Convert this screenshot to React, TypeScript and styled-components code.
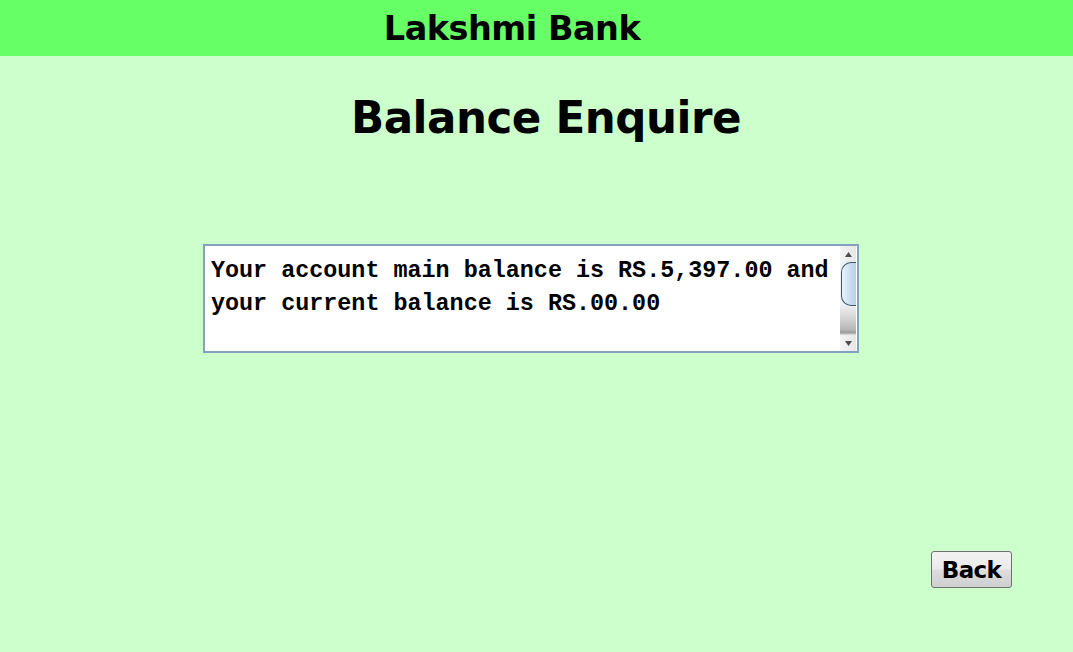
import React from "react";
import styled, { createGlobalStyle } from "styled-components";

const Global = createGlobalStyle`
  html, body { margin: 0; padding: 0; }
  body {
    background: #ccffcc;
    font-family: Tahoma, "DejaVu Sans", Verdana, sans-serif;
    width: 1073px;
    height: 652px;
    overflow: hidden;
  }
`;

const Page = styled.div`
  display: flex;
  flex-direction: column;
  height: 652px;
`;

const Header = styled.header`
  height: 56px;
  background: #66ff66;
  display: flex;
  align-items: center;
  justify-content: center;
  padding-right: 49px;
`;

const HeaderTitle = styled.h1`
  margin: 0;
  font-size: 33.5px;
  font-weight: bold;
  color: #000;
  letter-spacing: -0.5px;
`;

const PageTitle = styled.h2`
  margin: 30px 0 0;
  padding-left: 19px;
  text-align: center;
  font-size: 43.6px;
  font-weight: bold;
  color: #000;
  letter-spacing: -0.5px;
  line-height: 64px;
`;

const Content = styled.main`
  display: flex;
  flex-direction: column;
  padding: 0 0 0 203px;
  margin-top: 94px;
`;

const Box = styled.div`
  width: 652px;
  height: 105px;
  border: 2px solid #84a0c0;
  background: #fff;
  display: flex;
`;

const TextArea = styled.textarea`
  flex: 1;
  border: none;
  outline: none;
  resize: none;
  overflow: hidden;
  margin: 0;
  padding: 9px 0 0 6px;
  font-family: "Liberation Mono", "Courier New", monospace;
  font-weight: bold;
  font-size: 23.4px;
  line-height: 33px;
  color: #000;
  background: transparent;
`;

const ScrollBar = styled.div`
  width: 16px;
  margin: 0 1px 0 0;
  display: flex;
  flex-direction: column;
  background: linear-gradient(to right, #f3f3f3, #e9e9e9);
`;

const ArrowButton = styled.div`
  height: 16px;
  display: flex;
  align-items: center;
  justify-content: center;
  background: linear-gradient(to right, #f4f4f4, #e6e6e6);
`;

const Thumb = styled.div`
  height: 42px;
  margin-left: 1px;
  border: 1px solid #3c5a6e;
  border-right: none;
  border-radius: 10px 0 0 10px;
  background: linear-gradient(to right, #eaf3fb, #c9dcee 60%, #b9d0e6);
`;

const Track = styled.div`
  flex: 1;
  background: linear-gradient(to bottom, #eeeeee 0%, #d6d6d6 40%, #b8b8b8 80%, #9d9d9d 92%, #e3e3e3 100%);
`;

const Footer = styled.div`
  display: flex;
  justify-content: flex-end;
  padding-right: 61px;
  margin-top: 198px;
`;

const Button = styled.button`
  width: 81px;
  height: 37px;
  padding: 0;
  border: 1px solid #707070;
  border-radius: 3px;
  background: linear-gradient(to bottom, #f2f2f2 0%, #ebebeb 48%, #dddddd 52%, #cfcfcf 100%);
  font-family: Tahoma, "DejaVu Sans", Verdana, sans-serif;
  font-weight: bold;
  font-size: 23px;
  letter-spacing: -0.6px;
  color: #000;
  cursor: pointer;
`;

const Arrow = ({ down }: { down?: boolean }) => (
  <svg width="7" height="5" viewBox="0 0 7 5">
    <polygon points={down ? "0,0 7,0 3.5,5" : "0,5 7,5 3.5,0"} fill="#4d4d4d" />
  </svg>
);

export default function App() {
  return (
    <Page>
      <Global />
      <Header>
        <HeaderTitle>Lakshmi Bank</HeaderTitle>
      </Header>
      <PageTitle>Balance Enquire</PageTitle>
      <Content>
        <Box>
          <TextArea
            readOnly
            value="Your account main balance is RS.5,397.00 and your current balance is RS.00.00"
          />
          <ScrollBar>
            <ArrowButton>
              <Arrow />
            </ArrowButton>
            <Thumb />
            <Track />
            <ArrowButton>
              <Arrow down />
            </ArrowButton>
          </ScrollBar>
        </Box>
      </Content>
      <Footer>
        <Button>Back</Button>
      </Footer>
    </Page>
  );
}
